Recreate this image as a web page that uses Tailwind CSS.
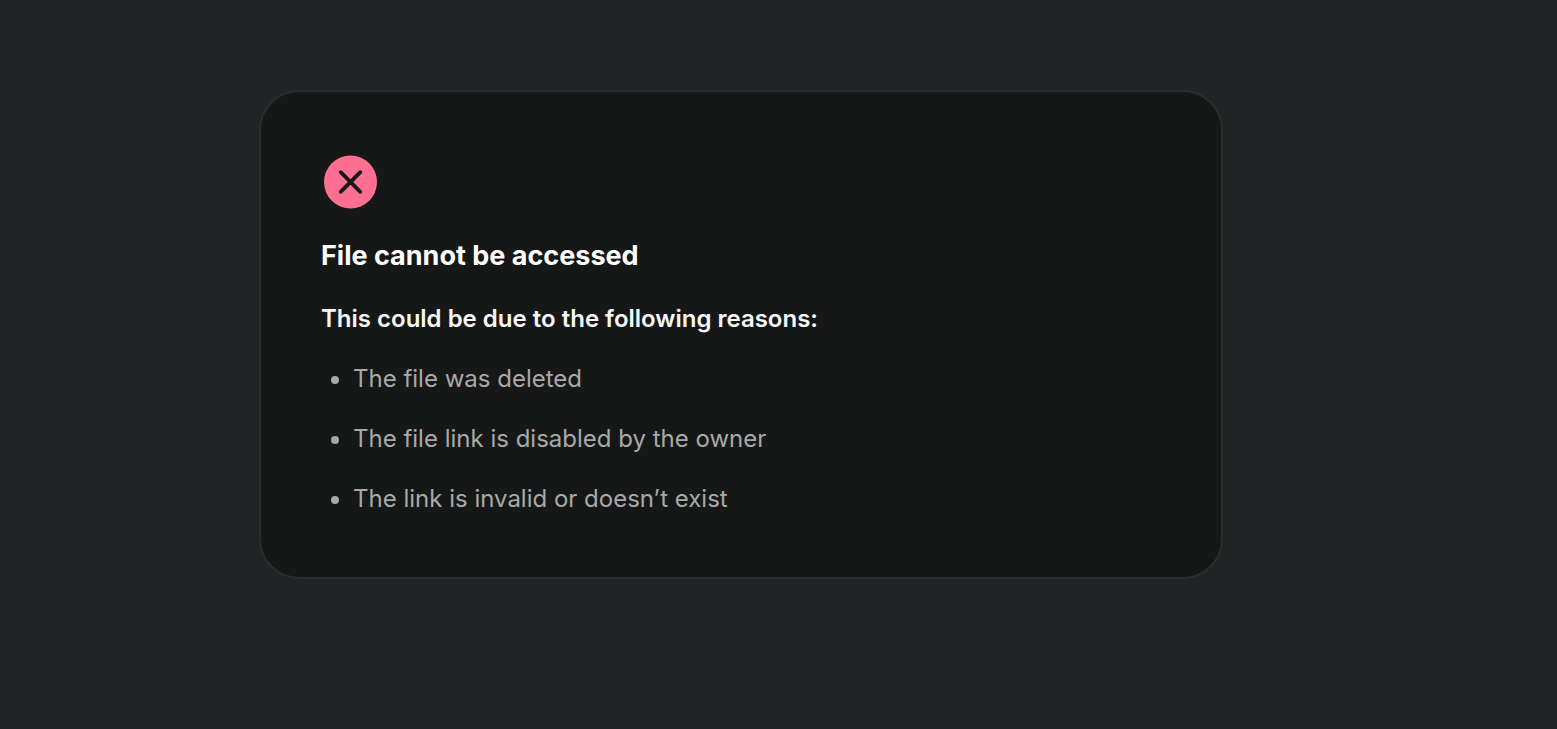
<!DOCTYPE html>
<html lang="en">
<head>
    <meta charset="UTF-8">
    <meta name="viewport" content="width=device-width, initial-scale=1.0">
    <title>File cannot be accessed</title>
    <script src="https://cdn.jsdelivr.net/npm/@tailwindcss/browser@4"></script>
</head>
<body class="min-h-screen bg-[#222325] font-['Inter',sans-serif] text-white">
    <main class="pt-[90px] pr-[75px]">
        <section class="mx-auto w-full max-w-[964px] rounded-[40px] border-2 border-[#2b2c2c] bg-[#161817] px-[60px] pt-[60px] pb-[58px]">
            <svg class="size-[60px]" viewBox="0 0 60 60" fill="none" aria-hidden="true">
                <circle cx="29.5" cy="30" r="26.5" fill="#ff6f91"/>
                <path d="M19.7 20.2 39.3 39.8M39.3 20.2 19.7 39.8" stroke="#161817" stroke-width="3.8" stroke-linecap="round"/>
            </svg>
            <h1 class="mt-[25px] text-[27px] leading-[38px] font-bold">File cannot be accessed</h1>
            <h2 class="mt-6 text-[24px] leading-10 font-semibold text-[#f7f7f7]">This could be due to the following reasons:</h2>
            <ul class="mt-5 list-disc space-y-5 pl-8 text-[24px] leading-10 text-[#a9a9a9]">
                <li>The file was deleted</li>
                <li>The file link is disabled by the owner</li>
                <li>The link is invalid or doesn’t exist</li>
            </ul>
        </section>
    </main>
</body>
</html>
